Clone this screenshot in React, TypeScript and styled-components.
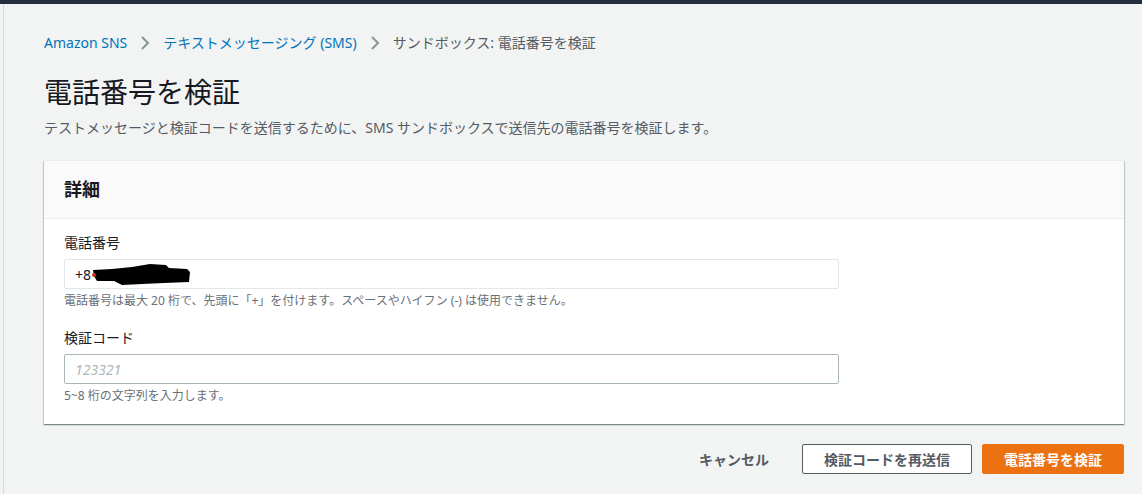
import styled, { createGlobalStyle } from "styled-components"

const GlobalStyle = createGlobalStyle`
  body {
    margin: 0;
    background: #f2f3f3;
    font-family: "Noto Sans", "Noto Sans CJK JP", sans-serif;
    color: #16191f;
  }
`
const TopBar = styled.div`
  height: 4px;
  background: #232f3e;
`
const Page = styled.div`
  margin-left: 3px;
  border-left: 1px solid #d5dbdb;
  padding: 29px 18px 20px 40px;
  min-height: 461px;
  box-sizing: border-box;
`
const Crumbs = styled.nav`
  display: flex;
  align-items: center;
  font-size: 14px;
  line-height: 20px;
  height: 20px;
`
const Crumb = styled.span<{ $link?: boolean }>`
  color: ${(p) => (p.$link ? "#0073bb" : "#545b64")};
`
const Sep = styled.svg`
  width: 16px;
  height: 16px;
  margin: 0 10px;
  flex: none;
`
const Title = styled.h1`
  margin: 21px 0 0;
  font-size: 28px;
  line-height: 36px;
  font-weight: 400;
`
const Desc = styled.p`
  margin: 8px 0 0;
  font-size: 14px;
  line-height: 20px;
  color: #545b64;
`
const Card = styled.section`
  margin-top: 22px;
  background: #fff;
  border-top: 1px solid #eaeded;
  box-shadow: 0 1px 1px 0 rgba(0, 28, 36, 0.3), 1px 1px 1px 0 rgba(0, 28, 36, 0.15),
    -1px 1px 1px 0 rgba(0, 28, 36, 0.15);
`
const CardHeader = styled.header`
  background: #fafafa;
  border-bottom: 1px solid #eaeded;
  padding: 16px 20px;
  font-size: 18px;
  line-height: 25px;
  font-weight: 700;
`
const CardBody = styled.div`
  padding: 14px 20px 20px;
  display: flex;
  flex-direction: column;
  gap: 19px;
`
const Field = styled.div`
  display: flex;
  flex-direction: column;
`
const Label = styled.label`
  font-size: 14px;
  line-height: 20px;
  margin-bottom: 6px;
`
const InputBox = styled.div<{ $muted?: boolean }>`
  position: relative;
  max-width: 775px;
  height: 30px;
  box-sizing: border-box;
  border: 1px solid ${(p) => (p.$muted ? "#e3e7e7" : "#aab7b8")};
  border-radius: 2px;
  background: #fff;
  display: flex;
  align-items: center;
  padding: 0 10px;
`
const Input = styled.input`
  border: none;
  outline: none;
  width: 100%;
  padding: 0;
  font-family: inherit;
  font-size: 14px;
  color: #16191f;
  background: transparent;
  &::placeholder {
    color: #aab7b8;
    font-style: italic;
  }
`
// 黒塗りの部分（電話番号のマスキング）
const Redact = styled.svg`
  position: absolute;
  left: 27px;
  top: 2px;
  width: 100px;
  height: 24px;
`
const Hint = styled.div`
  margin-top: 4px;
  font-size: 12px;
  line-height: 16px;
  color: #687078;
`
const Actions = styled.div`
  margin-top: 20px;
  display: flex;
  justify-content: flex-end;
  align-items: center;
`
const Button = styled.button<{ $variant: "link" | "normal" | "primary" }>`
  height: 30px;
  box-sizing: border-box;
  padding: 0 21px;
  font-family: inherit;
  font-size: 14px;
  font-weight: 700;
  border-radius: 2px;
  margin-left: ${(p) => (p.$variant === "primary" ? "10px" : p.$variant === "normal" ? "11px" : "0")};
  border: 1px solid
    ${(p) => (p.$variant === "primary" ? "#ec7211" : p.$variant === "normal" ? "#545b64" : "transparent")};
  background: ${(p) => (p.$variant === "primary" ? "#ec7211" : p.$variant === "normal" ? "#fff" : "transparent")};
  color: ${(p) => (p.$variant === "primary" ? "#fff" : "#545b64")};
  cursor: pointer;
`

const Chevron = () => (
  <Sep viewBox="0 0 16 16">
    <path d="M5 2l6 6-6 6" fill="none" stroke="#879596" strokeWidth="2" />
  </Sep>
)

export default function App() {
  return (
    <>
      <GlobalStyle />
      <TopBar />
      <Page>
        <Crumbs>
          <Crumb $link>Amazon SNS</Crumb>
          <Chevron />
          <Crumb $link>テキストメッセージング (SMS)</Crumb>
          <Chevron />
          <Crumb>サンドボックス: 電話番号を検証</Crumb>
        </Crumbs>
        <Title>電話番号を検証</Title>
        <Desc>テストメッセージと検証コードを送信するために、SMS サンドボックスで送信先の電話番号を検証します。</Desc>
        <Card>
          <CardHeader>詳細</CardHeader>
          <CardBody>
            <Field>
              <Label>電話番号</Label>
              <InputBox $muted>
                <Input defaultValue="+8" readOnly />
                <Redact viewBox="0 0 100 24" preserveAspectRatio="none">
                  <path
                    d="M1 8 L20 7 L40 5 L58 2 L74 3 L77 6 L95 7 L98 10 L97 20 L72 21 L50 22 L30 23 L22 19 L5 19 L2 14 Z"
                    fill="#000"
                  />
                  <circle cx="2" cy="13" r="2" fill="#d13212" />
                </Redact>
              </InputBox>
              <Hint>電話番号は最大 20 桁で、先頭に「+」を付けます。スペースやハイフン (-) は使用できません。</Hint>
            </Field>
            <Field>
              <Label>検証コード</Label>
              <InputBox>
                <Input placeholder="123321" />
              </InputBox>
              <Hint>5~8 桁の文字列を入力します。</Hint>
            </Field>
          </CardBody>
        </Card>
        <Actions>
          <Button $variant="link">キャンセル</Button>
          <Button $variant="normal">検証コードを再送信</Button>
          <Button $variant="primary">電話番号を検証</Button>
        </Actions>
      </Page>
    </>
  )
}
